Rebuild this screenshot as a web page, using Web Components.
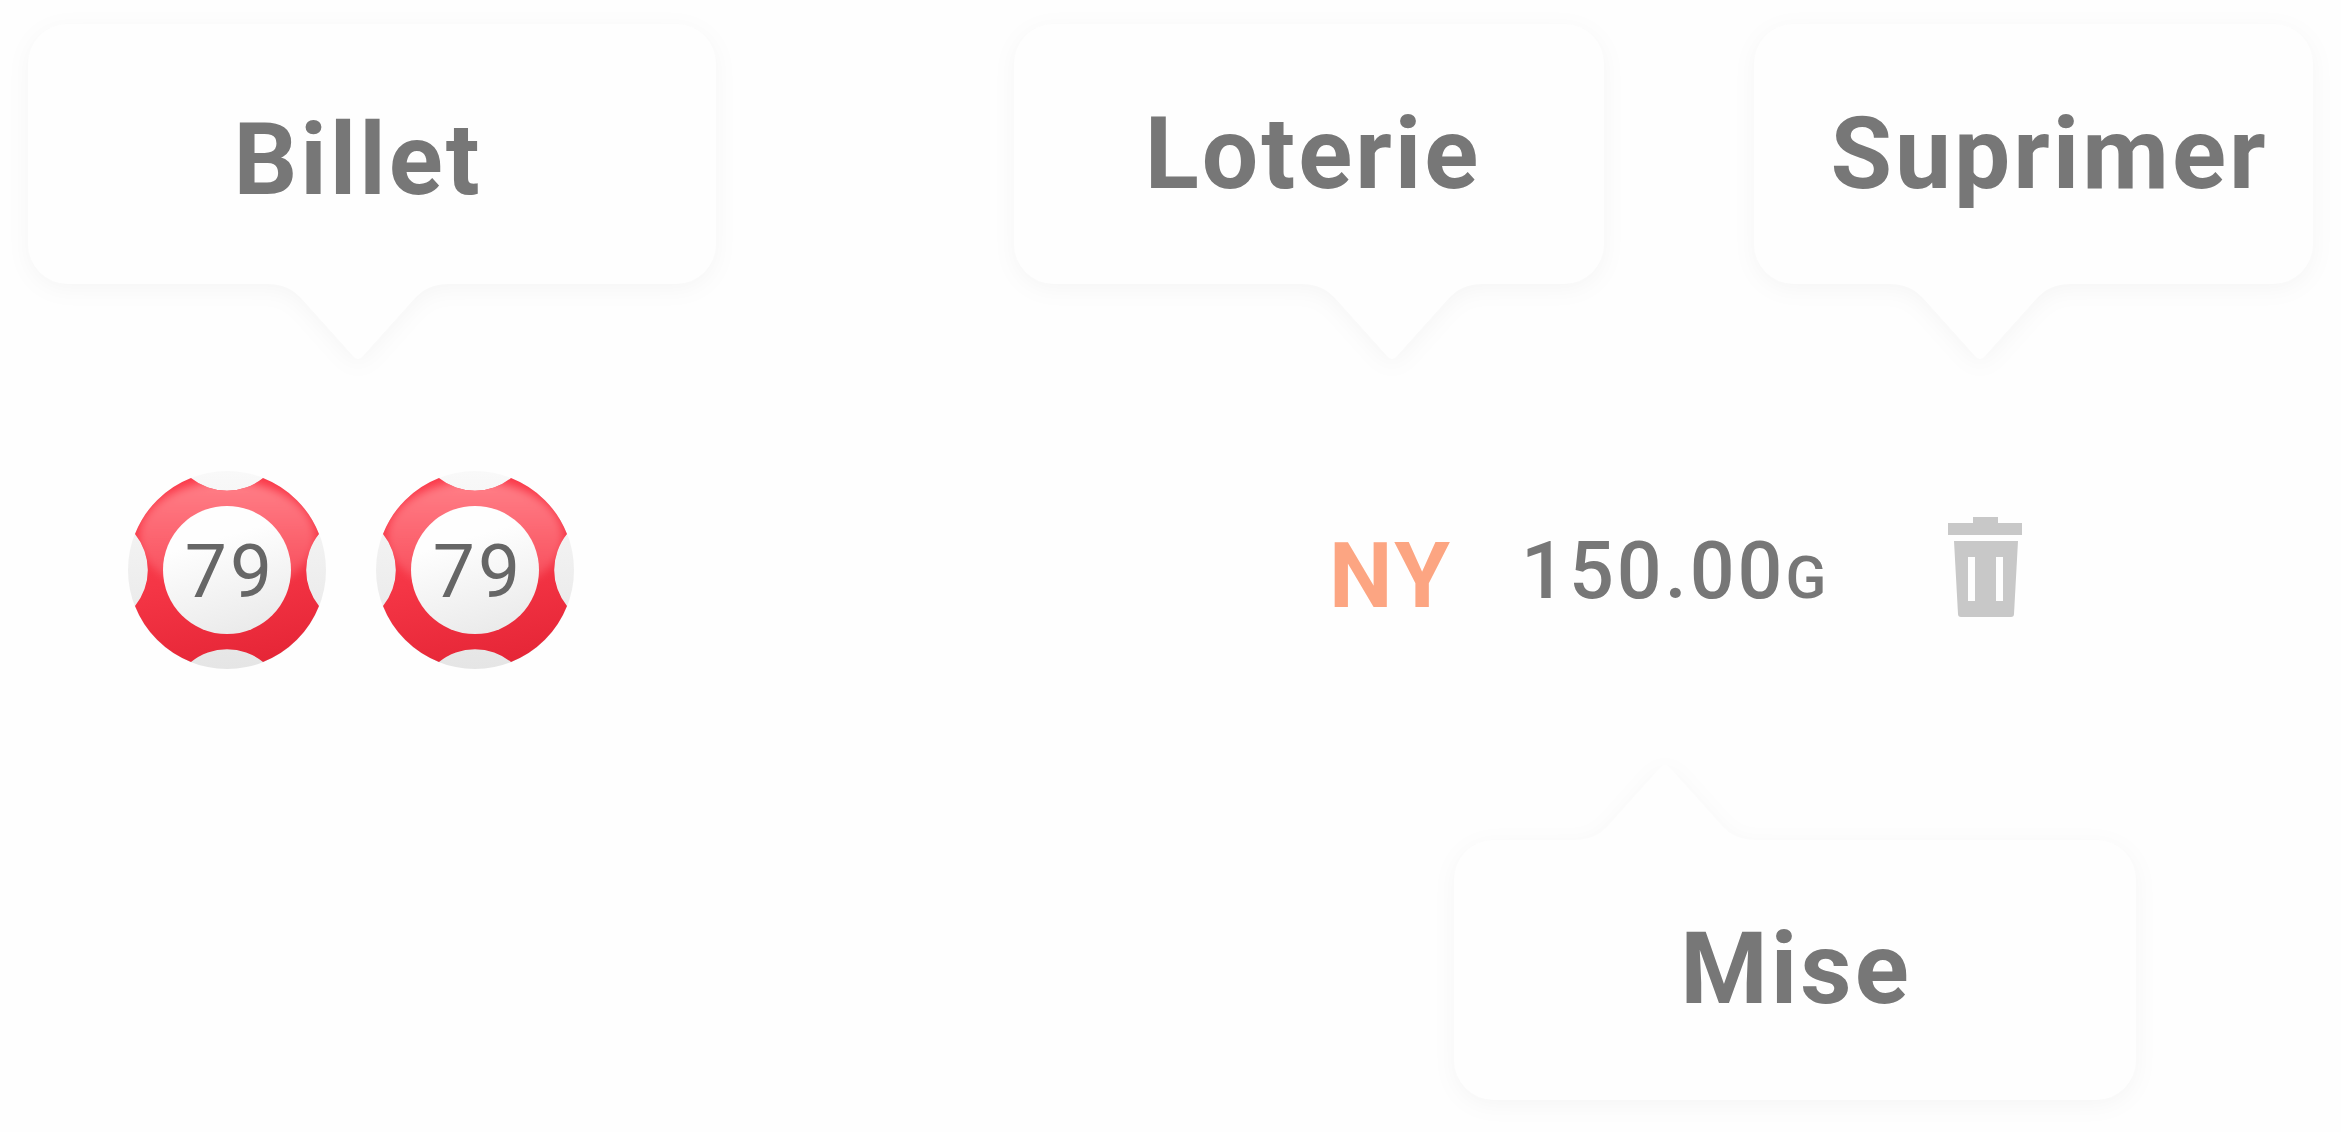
<!DOCTYPE html>
<html lang="fr">
<head>
<meta charset="utf-8">
<title>Billet</title>
<style>
  html, body { margin: 0; }
  body { background: #fefefe; color: #777; font-family: Roboto, "Liberation Sans", sans-serif; letter-spacing: 3px; }
</style>
</head>
<body>
<ticket-guide></ticket-guide>

<template id="guide-template">
  <style>
    :host { display: flex; flex-direction: column; min-height: 100vh; box-sizing: border-box; padding: 24px 28px 32px; }
    .hints { display: grid; }
    .top { grid-template-columns: 688fr 298fr 590fr 150fr 559fr; }
    .top > :nth-child(2) { grid-column: 3; }
    .top > :nth-child(3) { grid-column: 5; }
    .bottom { grid-template-columns: 1426fr 682fr 177fr; }
    .bottom > * { grid-column: 2; }
    ticket-row { flex: 1; }
  </style>
  <div class="hints top">
    <hint-bubble style="--tail: 48%; --pad: 12px 28px 0 0">Billet</hint-bubble>
    <hint-bubble style="--tail: 64%; --pad: 0 0 0 8px">Loterie</hint-bubble>
    <hint-bubble style="--tail: 40.5%; --pad: 0 0 0 32px">Suprimer</hint-bubble>
  </div>
  <ticket-row></ticket-row>
  <div class="hints bottom">
    <hint-bubble up style="--tail: 31%; --pad: 0 0 2px 2px">Mise</hint-bubble>
  </div>
</template>

<template id="bubble-template">
  <style>
    :host { display: flex; flex-direction: column; filter: drop-shadow(0 5px 11px rgba(0, 0, 0, .035)); }
    .card { display: flex; align-items: center; justify-content: center; box-sizing: border-box; height: 260px; padding: var(--pad); border-radius: 40px; background: #fefefe; font-size: 100px; line-height: 120px; font-weight: 700; }
    .tail { display: block; width: 180px; height: 76px; margin-left: calc(var(--tail) - 90px); fill: #fefefe; }
    :host([up]) { flex-direction: column-reverse; }
    :host([up]) .tail { transform: scaleY(-1); }
  </style>
  <div class="card"><span><slot></slot></span></div>
  <svg class="tail" viewBox="0 0 180 76" aria-hidden="true"><path d="M0 0C14 0 24 5 32 13L85 72Q90 78 95 72L148 13C156 5 166 0 180 0Z"/></svg>
</template>

<template id="row-template">
  <style>
    :host { display: grid; grid-template-columns: 100fr 1201fr 192fr 427fr 365fr; align-items: center; padding-top: 16px; }
    .balls { grid-column: 2; display: flex; gap: 50px; }
    .lottery { color: #fca582; font-size: 90px; line-height: 108px; font-weight: 700; padding-top: 14px; }
    .stake { font-size: 79px; line-height: 96px; font-weight: 500; padding-top: 8px; }
    small { font-size: 60px; }
    button { justify-self: start; display: block; border: 0; padding: 0 0 6px; background: none; color: #c8c8c8; }
    svg { display: block; width: 74px; height: 100px; fill: currentColor; }
  </style>
  <div class="balls"><lotto-ball>79</lotto-ball><lotto-ball>79</lotto-ball></div>
  <span class="lottery">NY</span>
  <span class="stake">150.00<small>G</small></span>
  <button type="button" aria-label="Suprimer">
    <svg viewBox="0 0 74 100"><path d="M0 6H25V0H50V6H74V18H0Z"/><path fill-rule="evenodd" d="M6 24H70L66 97Q66 100 63 100H13Q10 100 10 97ZM20 40V84H27V40ZM48 40V84H55V40Z"/></svg>
  </button>
</template>

<template id="ball-template">
  <style>
    :host { display: grid; width: 198px; height: 198px; place-items: center; }
    svg, span { grid-area: 1 / 1; }
    svg { display: block; width: 198px; height: 198px; }
    span { color: #666; font-size: 75px; line-height: 88px; padding: 2px 0 0 6px; z-index: 1; }
  </style>
  <svg viewBox="0 0 198 198" aria-hidden="true">
    <defs>
      <linearGradient id="white" x1="0" y1="0" x2="0" y2="1"><stop offset="0" stop-color="#f9f9f9"/><stop offset="1" stop-color="#e5e5e5"/></linearGradient>
      <linearGradient id="disc" x1=".35" y1="0" x2=".65" y2="1"><stop offset=".25" stop-color="#fefefe"/><stop offset="1" stop-color="#eaeaea"/></linearGradient>
      <linearGradient id="red" x1=".4" y1="0" x2=".6" y2="1"><stop offset="0" stop-color="#fb3a4a"/><stop offset=".5" stop-color="#f53646"/><stop offset="1" stop-color="#e52536"/></linearGradient>
      <linearGradient id="shine" x1="0" y1="0" x2="0" y2="1"><stop offset="0" stop-color="#ff7f88"/><stop offset="1" stop-color="#ff7f88" stop-opacity=".25"/></linearGradient>
      <filter id="soft" x="-20%" y="-20%" width="140%" height="140%"><feGaussianBlur stdDeviation="4"/></filter>
      <clipPath id="band"><path d="M63 7A57 57 0 0 0 135 7A99 99 0 0 1 191 63A57 57 0 0 0 191 135A99 99 0 0 1 135 191A57 57 0 0 0 63 191A99 99 0 0 1 7 135A57 57 0 0 0 7 63A99 99 0 0 1 63 7Z"/></clipPath>
    </defs>
    <circle cx="99" cy="99" r="99" fill="url(#white)"/>
    <g clip-path="url(#band)">
      <rect width="198" height="198" fill="url(#red)"/>
      <ellipse cx="99" cy="66" rx="88" ry="56" fill="url(#shine)" filter="url(#soft)"/>
    </g>
    <circle cx="99" cy="99" r="64" fill="url(#disc)"/>
  </svg>
  <span><slot></slot></span>
</template>

<script>
  const define = (name, templateId) => customElements.define(name, class extends HTMLElement {
    constructor() {
      super();
      this.attachShadow({ mode: 'open' }).append(document.getElementById(templateId).content.cloneNode(true));
    }
  });
  define('lotto-ball', 'ball-template');
  define('hint-bubble', 'bubble-template');
  define('ticket-row', 'row-template');
  define('ticket-guide', 'guide-template');
</script>
</body>
</html>
